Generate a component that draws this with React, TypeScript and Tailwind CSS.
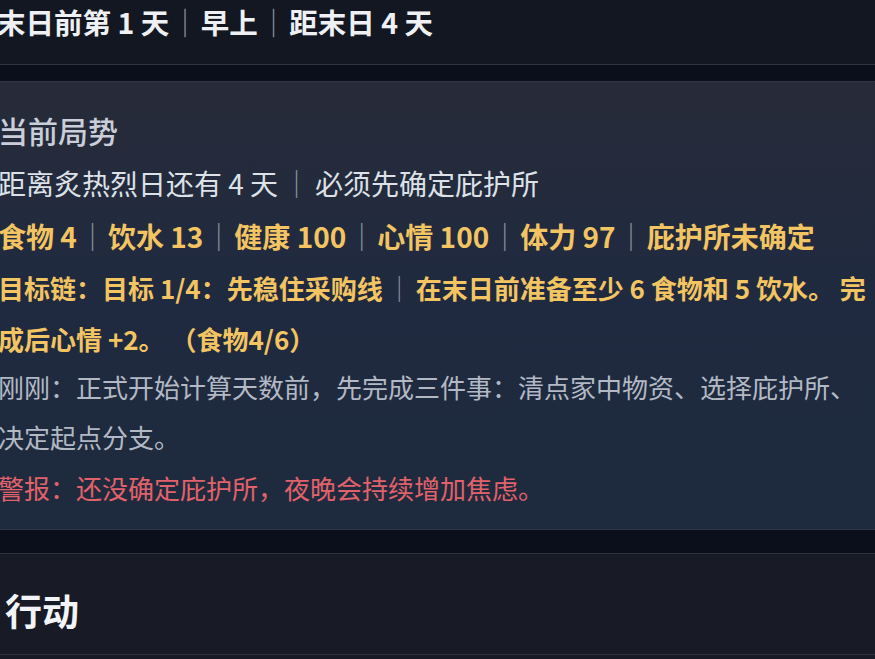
import React from 'react';

const Sep: React.FC = () => <span className="mx-[1.5px] text-[#8c929e] font-normal">｜</span>;

const App: React.FC = () => {
  const stats = ['食物 4', '饮水 13', '健康 100', '心情 100', '体力 97', '庇护所未确定'];

  return (
    <div className="w-[875px] h-[659px] overflow-hidden bg-[#0b0f1c] font-['Noto_Sans_CJK_SC','Noto_Sans',sans-serif]">
      <div className="-ml-[20px] w-[920px]">
        {/* Top status bar */}
        <div className="h-[65px] bg-[#131722] border-b border-[#2e3340] pl-[17px]">
          <div className="text-[28.5px] leading-[44px] font-bold text-[#eef0f4] whitespace-nowrap">
            末日前第 1 天<Sep />早上<Sep />距末日 4 天
          </div>
        </div>

        {/* Current situation */}
        <div className="mt-[16px] rounded-[10px] border border-[#303646] bg-gradient-to-b from-[#272b39] via-[#1f2a40] to-[#1e2a3d] pl-[17px] pr-[24px] pt-[22px] pb-[16px]">
          <h2 className="text-[30px] leading-[52px] font-medium text-[#c9ced8]">当前局势</h2>
          <p className="text-[28px] leading-[54px] text-[#dde1e8]">
            距离炙热烈日还有 4 天<span className="mx-[3px]"><Sep /></span>必须先确定庇护所
          </p>
          <p className="text-[28px] leading-[52px] font-bold text-[#f3c462] whitespace-nowrap">
            {stats.map((s, i) => (
              <React.Fragment key={s}>
                {i > 0 && <Sep />}
                {s}
              </React.Fragment>
            ))}
          </p>
          <p className="text-[26px] leading-[51px] font-bold text-[#f3c462]">
            目标链：目标 1/4：先稳住采购线<span className="mx-[2px]"><Sep /></span>在末日前准备至少 6 食物和 5 饮水。 完成后心情 +2。 （食物4/6）
          </p>
          <p className="-mt-[2px] text-[26px] leading-[50px] text-[#b3b9c4]">
            刚刚：正式开始计算天数前，先完成三件事：清点家中物资、选择庇护所、决定起点分支。
          </p>
          <p className="mt-[1px] text-[26px] leading-[50px] text-[#e2626b]">
            警报：还没确定庇护所，夜晚会持续增加焦虑。
          </p>
        </div>

        {/* Actions */}
        <div className="mt-[23px] rounded-t-[10px] border-t border-[#2b303c] bg-[#181b26] min-h-[200px]">
          <div className="pl-[25px] pt-[32px] pb-[20px] border-b border-[#2f3440]">
            <h2 className="text-[37px] leading-[48px] font-bold text-[#f2f4f7]">行动</h2>
          </div>
        </div>
      </div>
    </div>
  );
};

export default App;
